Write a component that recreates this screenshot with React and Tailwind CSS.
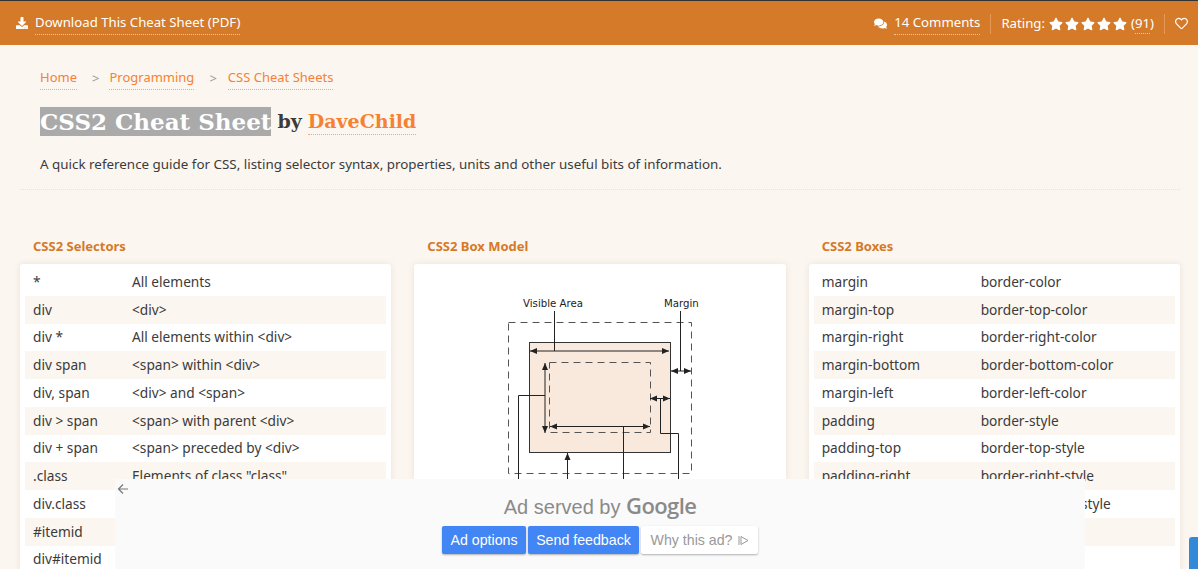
import { FaComments, FaDownload, FaRegHeart, FaStar } from "react-icons/fa";

const selectors = [
  ["*", "All elements"],
  ["div", "<div>"],
  ["div *", "All elements within <div>"],
  ["div span", "<span> within <div>"],
  ["div, span", "<div> and <span>"],
  ["div > span", "<span> with parent <div>"],
  ["div + span", "<span> preceded by <div>"],
  [".class", 'Elements of class "class"'],
  ["div.class", '<div> of class "class"'],
  ["#itemid", 'Element with ID "itemid"'],
  ["div#itemid", '<div> with ID "itemid"'],
];

const boxes = [
  ["margin", "border-color"],
  ["margin-top", "border-top-color"],
  ["margin-right", "border-right-color"],
  ["margin-bottom", "border-bottom-color"],
  ["margin-left", "border-left-color"],
  ["padding", "border-style"],
  ["padding-top", "border-top-style"],
  ["padding-right", "border-right-style"],
  ["padding-bottom", "border-bottom-style"],
  ["padding-left", "border-left-style"],
  ["border", "border-width"],
];

const TableRows = ({ rows, keyCol }) => (
  <div>
    {rows.map((row, i) => (
      <div
        key={row[0]}
        className={`flex h-[27.75px] items-center pl-2 text-[13.7px] leading-[20px] text-[#3b3b3b] ${i % 2 === 1 ? "bg-[#fbf6f0]" : ""}`}
      >
        <span className={`shrink-0 ${keyCol}`}>{row[0]}</span>
        <span className="whitespace-nowrap">{row[1]}</span>
      </div>
    ))}
  </div>
);

const Panel = ({ title, children }) => (
  <div>
    <h3 className="mb-[9px] h-[18px] pl-[13px] text-[13px] leading-[18px] font-bold text-[#d47a28]">{title}</h3>
    <div className="h-[320px] rounded-[3px] bg-white px-[5px] pt-1 shadow-[0_0_6px_rgba(120,90,60,0.12)]">
      {children}
    </div>
  </div>
);

const Arrow = ({ d }) => <path d={d} fill="#222" stroke="none" />;

const BoxDiagram = () => (
  <svg width="362" height="316" viewBox="419 268 362 316" className="block">
    <rect x="529.5" y="342.5" width="141" height="110" fill="#f9e9dc" stroke="#333" />
    <rect x="508.5" y="322.5" width="183" height="151" fill="none" stroke="#555" strokeDasharray="7 5" />
    <rect x="549.5" y="362.5" width="101" height="70" fill="none" stroke="#555" strokeDasharray="7 5" />
    <text x="523" y="307" fontSize="10.2" fill="#222" fontFamily="'DejaVu Sans', sans-serif">Visible Area</text>
    <text x="664" y="307" fontSize="10.2" fill="#222" fontFamily="'DejaVu Sans', sans-serif">Margin</text>
    <g stroke="#222" fill="none">
      <path d="M554.5 311V351M530 351H669" />
      <path d="M680.5 311V371M671 371H691" />
      <path d="M545 363V433M545 395.5H518.5V500" />
      <path d="M550 426.5H650M623.5 426.5V500" />
      <path d="M650 398.5H670M660.5 398.5V433.5H678.5V500" />
      <path d="M567.5 453V500" />
    </g>
    <Arrow d="M530 351l7-3v6zM669 351l-7-3v6z" />
    <Arrow d="M671 371l7-3v6zM691 371l-7-3v6z" />
    <Arrow d="M545 363l-3 7h6zM545 433l-3-7h6z" />
    <Arrow d="M550 426.5l7-3v6zM650 426.5l-7-3v6z" />
    <Arrow d="M650 398.5l7-3v6zM670 398.5l-7-3v6z" />
    <Arrow d="M567.5 453l-3 7h6z" />
  </svg>
);

const DottedLink = ({ children, className = "" }) => (
  <span className={`border-b border-dotted ${className}`}>{children}</span>
);

export default function App() {
  return (
    <div className="relative h-[569px] w-[1198px] overflow-hidden bg-[#fbf6f0] font-['Noto_Sans',sans-serif] text-[13px]">
      <header className="flex h-[45px] items-center justify-between border-t border-[#333] bg-[#d47a28] pt-[2px] pr-[10px] pl-4 text-[13.2px] text-white">
        <div className="flex items-center">
          <FaDownload className="mr-[7px] h-3 w-3 -translate-y-[1px]" />
          <DottedLink className="border-[#f3c796] pb-[1px]">Download This Cheat Sheet (PDF)</DottedLink>
        </div>
        <div className="flex items-center">
          <FaComments className="mr-[7px] h-[13px] w-[13px]" />
          <DottedLink className="border-[#f3c796] pb-[1px]">14 Comments</DottedLink>
          <span className="mx-[10px] h-5 w-px bg-[#e49a55]" />
          <span>Rating:</span>
          <span className="mx-[4px] flex gap-[2px]">
            {[0, 1, 2, 3, 4].map((n) => (
              <FaStar key={n} className="h-[14px] w-[14px]" />
            ))}
          </span>
          <span>
            (<DottedLink className="border-[#f3c796] pb-[1px]">91</DottedLink>)
          </span>
          <span className="mx-[10px] h-5 w-px bg-[#e49a55]" />
          <FaRegHeart className="h-[13px] w-[13px]" />
        </div>
      </header>

      <section className="mr-[18px] ml-5 h-[145px] border-b border-dotted border-[#e9e3db] px-5 pt-6">
        <nav className="flex h-5 items-center text-[#f58233]">
          <DottedLink className="border-[#f7a46d] pb-[1px]">Home</DottedLink>
          <span className="mr-[10px] ml-[15px] text-[#999]">&gt;</span>
          <DottedLink className="border-[#f7a46d] pb-[1px]">Programming</DottedLink>
          <span className="mr-[11px] ml-[15px] text-[#999]">&gt;</span>
          <DottedLink className="border-[#f7a46d] pb-[1px]">CSS Cheat Sheets</DottedLink>
        </nav>
        <h1 className="mt-[18px] flex h-[29px] items-center font-['DejaVu_Serif',serif] text-[23px] leading-[29px] font-bold whitespace-nowrap text-[#3b3b3b]">
          <span className="bg-[#aaaaaa] text-white">CSS2 Cheat Sheet</span>
          <span className="ml-[6px] text-[19px]">by</span>
          <span className="ml-[6px] border-b border-dotted border-[#f7a46d] text-[19px] leading-[25px] text-[#f58233]">DaveChild</span>
        </h1>
        <p className="mt-[18px] text-[13.4px] text-[#3b3b3b]">
          A quick reference guide for CSS, listing selector syntax, properties, units and other useful bits of information.
        </p>
      </section>

      <main className="mt-[47px] grid grid-cols-3 gap-[23px] pr-[18px] pl-5">
        <Panel title="CSS2 Selectors">
          <TableRows rows={selectors} keyCol="w-[99px]" />
        </Panel>
        <Panel title="CSS2 Box Model">
          <BoxDiagram />
        </Panel>
        <Panel title="CSS2 Boxes">
          <TableRows rows={boxes} keyCol="w-[159px]" />
        </Panel>
      </main>

      <div className="absolute right-0 bottom-0 h-8 w-[9px] rounded-tl-[3px] bg-[#3488d8]" />

      <aside className="absolute top-[479px] left-[115px] flex h-[90px] w-[970px] flex-col items-center bg-[#fafafa] font-['Liberation_Sans',sans-serif]">
        <svg width="12" height="12" viewBox="0 0 12 12" className="absolute top-[4px] left-[2px]" fill="none" stroke="#777" strokeWidth="1.2">
          <path d="M11 6H1.5M6 1.5 1.5 6 6 10.5" />
        </svg>
        <p className="mt-[14px] h-6 text-[20px] leading-6 text-[#8a8a8a]">
          Ad served by <span className="font-['Open_Sans',sans-serif] text-[22px] font-semibold tracking-[-0.6px]">Google</span>
        </p>
        <div className="mt-[9px] flex gap-[2px] text-[14.2px]">
          <span className="flex h-[28px] w-[84px] items-center justify-center rounded-[2px] bg-[#4285f4] pt-[1px] text-white shadow-[0_1px_2px_rgba(0,0,0,0.3)]">Ad options</span>
          <span className="flex h-[28px] w-[111px] items-center justify-center rounded-[2px] bg-[#4285f4] pt-[1px] text-white shadow-[0_1px_2px_rgba(0,0,0,0.3)]">Send feedback</span>
          <span className="flex h-[28px] w-[117px] items-center justify-center gap-[5px] rounded-[2px] bg-white pt-[1px] text-[#999] shadow-[0_1px_2px_rgba(0,0,0,0.3)]">
            Why this ad?
            <svg width="11" height="11" viewBox="0 0 11 11" fill="none" stroke="#999">
              <path d="M1 1V10M3 1.5 10 5.5 3 9.5Z" />
            </svg>
          </span>
        </div>
      </aside>
    </div>
  );
}
